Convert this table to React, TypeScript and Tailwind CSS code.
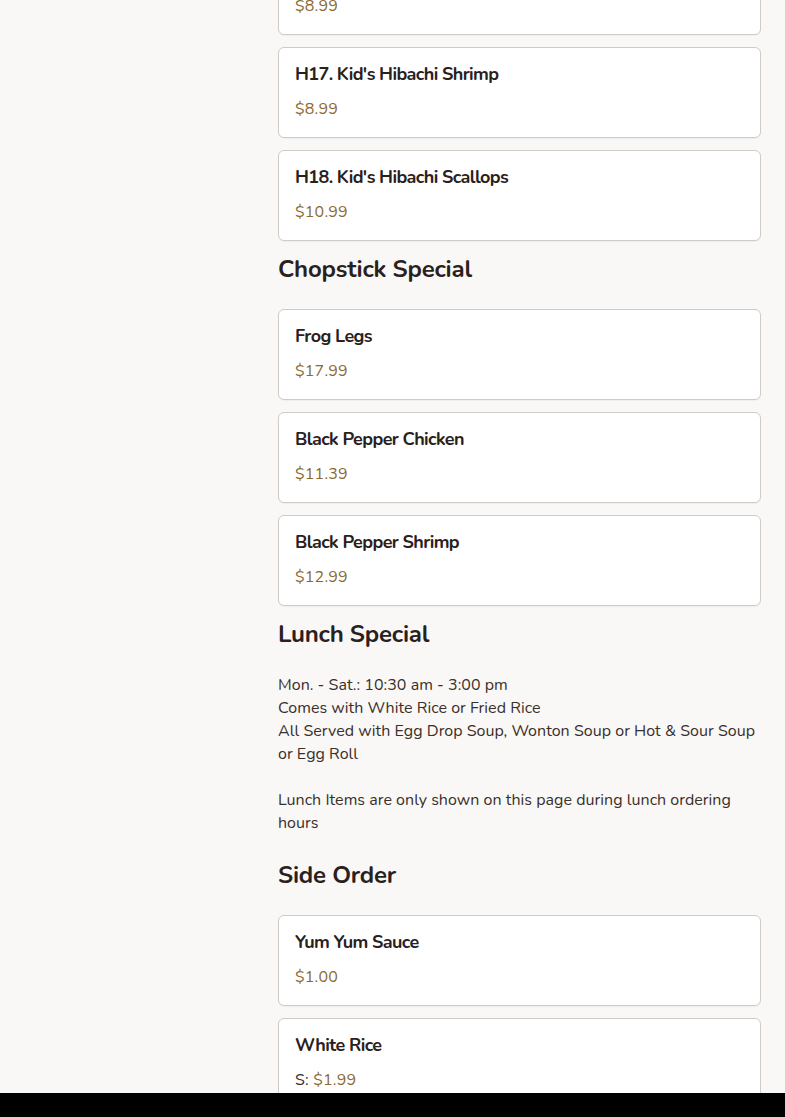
import React from "react";

const font = { fontFamily: '"Nunito", "Lato", "Noto Sans", sans-serif' };

function Card({ title, price, prefix }: { title: string; price: string; prefix?: string }) {
  return (
    <div className="bg-white border border-[#cfcbc6] rounded-[6px] pl-4 pr-4 pt-[15px] pb-4 shadow-[0_1px_1px_rgba(0,0,0,0.04)]">
      <div className="text-[18px] leading-[22px] font-bold text-[#2a201c] tracking-[-0.6px]">{title}</div>
      <div className="mt-3 text-[16px] leading-6 text-[#8a6a30] tracking-[0.2px]">
        {prefix && <span className="text-[#3a2f2a]">{prefix} </span>}
        {price}
      </div>
    </div>
  );
}

function Heading({ children }: { children: React.ReactNode }) {
  return <h2 className="text-[24px] leading-8 font-bold text-[#2a201c] tracking-[-0.2px]">{children}</h2>;
}

export default function App() {
  return (
    <div className="h-[1117px] overflow-hidden bg-[#f9f8f6] relative" style={font}>
      <div className="pl-[278px] pr-6 -mt-[56px]">
        <div className="flex flex-col gap-3">
          <Card title="H16. Kid's Hibachi Chicken" price="$8.99" />
          <Card title="H17. Kid's Hibachi Shrimp" price="$8.99" />
          <Card title="H18. Kid's Hibachi Scallops" price="$10.99" />
        </div>
        <div className="mt-3">
          <Heading>Chopstick Special</Heading>
        </div>
        <div className="mt-6 flex flex-col gap-3">
          <Card title="Frog Legs" price="$17.99" />
          <Card title="Black Pepper Chicken" price="$11.39" />
          <Card title="Black Pepper Shrimp" price="$12.99" />
        </div>
        <div className="mt-3">
          <Heading>Lunch Special</Heading>
        </div>
        <div className="mt-6 text-[16px] leading-[23px] text-[#3a2f2a] tracking-[0.03px]">
          <p>Mon. - Sat.: 10:30 am - 3:00 pm</p>
          <p>Comes with White Rice or Fried Rice</p>
          <p>All Served with Egg Drop Soup, Wonton Soup or Hot &amp; Sour Soup or Egg Roll</p>
          <p className="h-[23px]"></p>
          <p>Lunch Items are only shown on this page during lunch ordering hours</p>
        </div>
        <div className="mt-6">
          <Heading>Side Order</Heading>
        </div>
        <div className="mt-6 flex flex-col gap-3">
          <Card title="Yum Yum Sauce" price="$1.00" />
          <Card title="White Rice" prefix="S:" price="$1.99" />
          <Card title="Fried Rice" prefix="S:" price="$3.99" />
        </div>
      </div>
      <div className="fixed left-0 right-0 bottom-0 h-6 bg-black"></div>
    </div>
  );
}
